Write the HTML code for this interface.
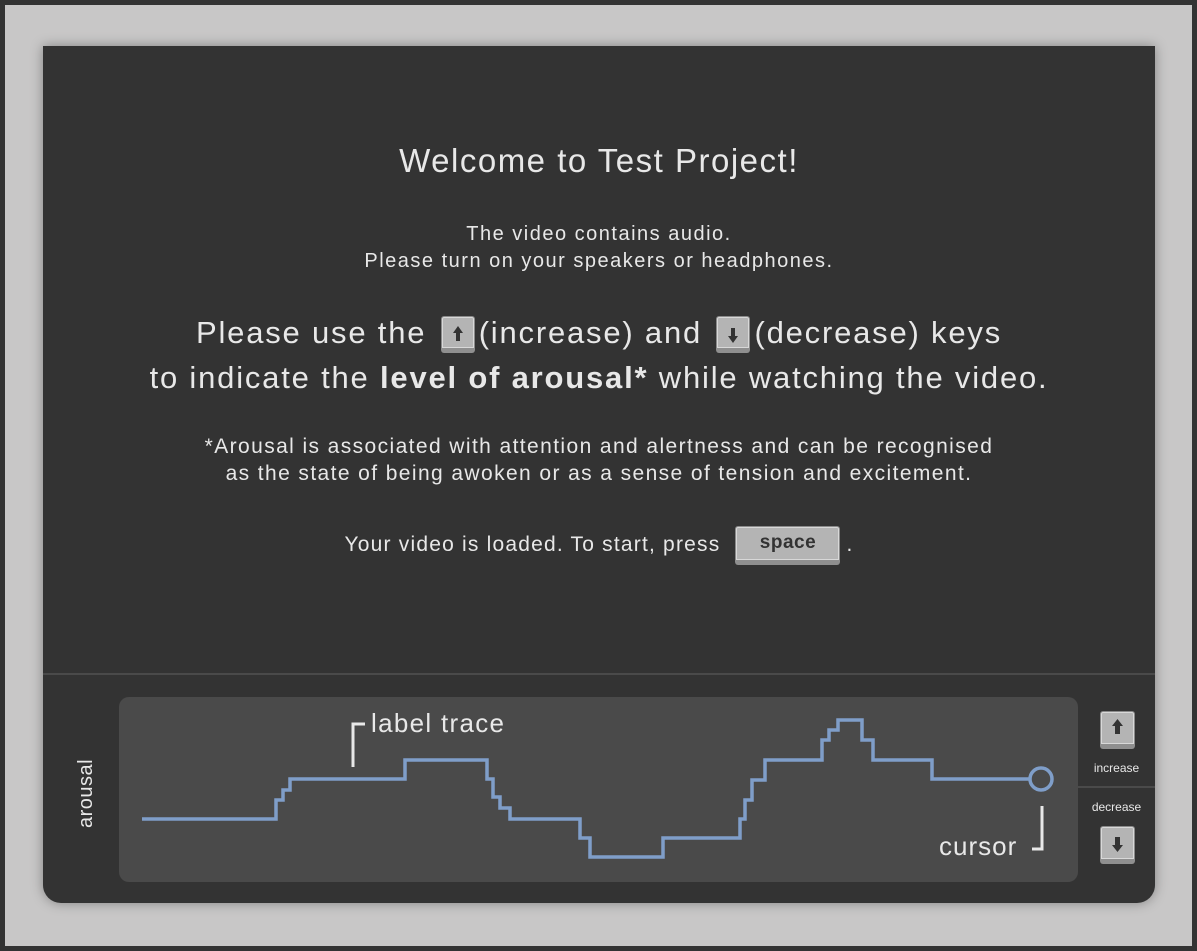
<!DOCTYPE html>
<html><head><style>
*{margin:0;padding:0;box-sizing:border-box}
body{width:1197px;height:951px;background:#333;position:relative;overflow:hidden;font-family:"Liberation Sans",sans-serif;color:#e8e8e8}
.bg{position:absolute;left:5px;top:5px;width:1187px;height:941px;background:#c8c7c7}
.panel{position:absolute;left:43px;top:46px;width:1112px;height:857px;background:#333;border-radius:0 0 18px 18px;box-shadow:0 0 12px rgba(0,0,0,.35)}
.c{position:absolute;left:0;width:100%;text-align:center}
.key{display:inline-block;background:#b4b4b4;border:1px solid #8a8a8a;border-bottom:5px solid #8f8f8f;border-radius:3px;box-shadow:inset 0 0 0 1px #d8d8d8;color:#333;vertical-align:middle;position:relative;letter-spacing:0}
.sep{position:absolute;left:0;top:627px;width:100%;height:2px;background:#4a4a4a}
.graph{position:absolute;left:76px;top:651px;width:959px;height:185px;background:#4a4a4a;border-radius:10px}
</style></head><body>
<div class="bg"></div>
<div class="panel">
<div class="c" style="top:96px;font-size:33px;letter-spacing:1.5px">Welcome to Test Project!</div>
<div class="c" style="top:175px;font-size:20px;line-height:27px;letter-spacing:1.5px">The video contains audio.<br>Please turn on your speakers or headphones.</div>
<div class="c" style="top:264px;font-size:31px;line-height:45px;letter-spacing:1.8px">Please use the <span class="key" style="width:34px;height:37px;margin:0 4px 0 4px"><svg width="32" height="31" viewBox="0 0 32 31"><path d="M16 7 L21 14 H18 V22 H14 V14 H11 Z" fill="#333"/></svg></span>(increase) and <span class="key" style="width:34px;height:37px;margin:0 4px 0 4px"><svg width="32" height="31" viewBox="0 0 32 31"><path d="M16 24 L21 17 H18 V9 H14 V17 H11 Z" fill="#333"/></svg></span>(decrease) keys<br>to indicate the <b>level of arousal*</b> while watching the video.</div>
<div class="c" style="top:387px;font-size:21px;line-height:27px;letter-spacing:1.4px">*Arousal is associated with attention and alertness and can be recognised<br>as the state of being awoken or as a sense of tension and excitement.</div>
<div class="c" style="top:479px;font-size:21px;line-height:40px;letter-spacing:1.2px">Your video is loaded. To start, press <span class="key" style="width:105px;height:39px;font-weight:bold;font-size:19px;line-height:32px;margin:0 6px 0 8px;letter-spacing:0.5px">space</span>.</div>
<div class="sep"></div>
<div style="position:absolute;left:32px;top:782px;transform:rotate(-90deg);transform-origin:0 0;font-size:20px;letter-spacing:0.5px">arousal</div>
<div class="graph"></div>
<svg style="position:absolute;left:0;top:0" width="1112" height="857" viewBox="43 46 1112 857">
<path d="M142 819 H276 V800 H283 V790 H290 V779 H405 V760 H487 V779 H493 V797 H500 V808 H510 V819 H580 V838 H590 V857 H663 V838 H740 V819 H745 V800 H752 V780 H765 V760 H822 V740 H829 V730 H838 V720 H862 V740 H873 V760 H932 V779 H1031" fill="none" stroke="#7f9ec9" stroke-width="3.5"/>
<circle cx="1041" cy="779" r="11" fill="none" stroke="#7f9ec9" stroke-width="3.5"/>
<path d="M365 724 H353 V767" fill="none" stroke="#e8e8e8" stroke-width="3"/>
<path d="M1032 849 H1042 V806" fill="none" stroke="#e8e8e8" stroke-width="3"/>
<text x="371" y="732" font-family="Liberation Sans" font-size="26" letter-spacing="1.3" fill="#e8e8e8">label trace</text>
<text x="939" y="855" font-family="Liberation Sans" font-size="26" letter-spacing="1" fill="#e8e8e8">cursor</text>
</svg>
<div style="position:absolute;left:1035px;top:740px;width:77px;height:2px;background:#4a4a4a"></div>
<span class="key" style="position:absolute;left:1057px;top:665px;width:35px;height:38px"><svg width="33" height="32" viewBox="0 0 33 32"><path d="M16.5 7 L22 14 H19 V22 H14 V14 H11 Z" fill="#333"/></svg></span>
<div style="position:absolute;left:1035px;top:715px;width:77px;text-align:center;font-size:12px">increase</div>
<div style="position:absolute;left:1035px;top:754px;width:77px;text-align:center;font-size:12px">decrease</div>
<span class="key" style="position:absolute;left:1057px;top:780px;width:35px;height:38px"><svg width="33" height="32" viewBox="0 0 33 32"><path d="M16.5 25 L22 18 H19 V10 H14 V18 H11 Z" fill="#333"/></svg></span>
</div>
</body></html>
